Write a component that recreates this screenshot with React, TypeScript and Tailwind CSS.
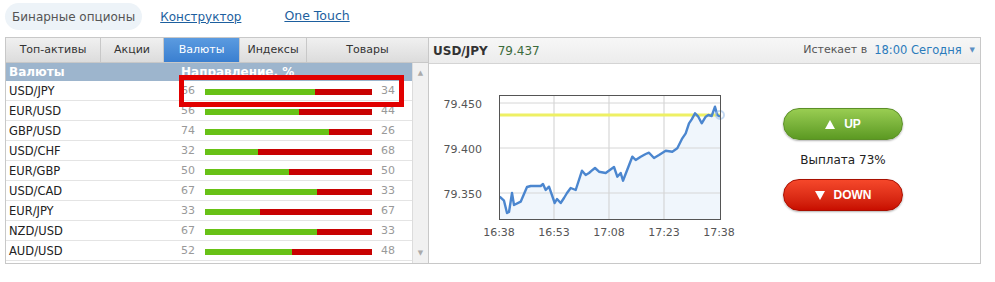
import React from 'react';

const tabs = [
  { label: 'Топ-активы', w: 'w-[95px]' },
  { label: 'Акции', w: 'w-[63px]' },
  { label: 'Валюты', w: 'w-[76px]', active: true },
  { label: 'Индексы', w: 'w-[67px]' },
  { label: 'Товары', w: 'flex-1' },
];

const rows: [string, number][] = [
  ['USD/JPY', 66],
  ['EUR/USD', 56],
  ['GBP/USD', 74],
  ['USD/CHF', 32],
  ['EUR/GBP', 50],
  ['USD/CAD', 67],
  ['EUR/JPY', 33],
  ['NZD/USD', 67],
  ['AUD/USD', 52],
];

// price line in page coordinates
const line: [number, number][] = [
  [500.7, 196.7], [505, 200.7], [508, 213], [510, 212], [513, 193], [515, 205], [521.7, 201.7],
  [528, 187], [531.7, 186], [541.7, 186], [544, 184], [546.7, 190], [550, 186.7], [555.7, 203],
  [558, 199], [561.7, 203], [565, 198], [568, 193], [571.7, 188], [576.7, 190], [583, 170.7],
  [586.7, 175], [590, 173], [592.7, 170.7], [596, 168], [600, 171.7], [606.7, 173], [615, 167],
  [618.3, 176.7], [621.7, 173], [624, 180.7], [633.3, 156.7], [636.7, 160], [641.7, 156.7],
  [646.7, 154], [650, 152.7], [655, 158], [660, 155], [666.7, 150.7], [673.3, 151.7],
  [678.3, 148.3], [683.3, 138.3], [686.7, 133.3], [690, 123.3], [692.7, 119.3], [696, 113.3],
  [699.3, 116.7], [702.7, 123.3], [706.7, 116.7], [709.3, 115], [712.7, 116], [716, 106.7],
  [718.3, 115], [721, 116.7],
];

function Tri({ down }: { down?: boolean }) {
  return (
    <svg width="10" height="9" viewBox="0 0 10 9">
      <polygon points={down ? '0,0 10,0 5,9' : '5,0 10,9 0,9'} fill="white" />
    </svg>
  );
}

function Chart() {
  const pts = line.map(([x, y]) => `${x},${y}`).join(' ');
  const area = `500,219 ${pts} 721,219`;
  const font = { fontFamily: '"DejaVu Sans", sans-serif', fontSize: 11, fill: '#555' };
  return (
    <svg width="310" height="198" viewBox="430 64 310 198" className="block">
      <polygon points={area} fill="#f0f6fc" />
      {[555, 610, 665].map((x) => (
        <line key={x} x1={x} y1={95} x2={x} y2={219} stroke="#cfcfcf" strokeWidth="1" />
      ))}
      {[103, 148, 193].map((y) => (
        <line key={y} x1={500} y1={y} x2={721} y2={y} stroke="#d6d6d6" strokeWidth="1" />
      ))}
      <line x1={500} y1={115} x2={721} y2={115} stroke="#eef064" strokeWidth="3" />
      <polyline points={pts} fill="none" stroke="#4b86cf" strokeWidth="2.4" strokeLinejoin="round" />
      <circle cx={721} cy={115} r={4} fill="none" stroke="#9cc0ea" strokeWidth="2" opacity="0.6" />
      <rect x={500.5} y={95.5} width={221} height={124} fill="none" stroke="#555" strokeWidth="1" />
      {[
        ['79.450', 108],
        ['79.400', 153],
        ['79.350', 198],
      ].map(([t, y]) => (
        <text key={t} x={483} y={y as number} textAnchor="end" {...font}>
          {t}
        </text>
      ))}
      {['16:38', '16:53', '17:08', '17:23', '17:38'].map((t, i) => (
        <text key={t} x={500 + i * 55} y={236} textAnchor="middle" {...font}>
          {t}
        </text>
      ))}
    </svg>
  );
}

export default function App() {
  return (
    <div className="relative w-[995px] h-[282px] bg-white text-[11px] text-[#222]" style={{ fontFamily: '"DejaVu Sans", Verdana, sans-serif' }}>
      <div className="flex items-center h-[27px] mt-[3px] ml-[5px] text-[12px]">
        <div className="h-[27px] px-[7px] flex items-center rounded-full bg-[#edf3f8] text-[#555]">
          Бинарные опционы
        </div>
        <a className="ml-[18px] text-[#1d5f9e] underline">Конструктор</a>
        <a className="ml-[43px] text-[#1d5f9e] underline text-[12.5px]">One Touch</a>
      </div>

      <div className="flex mt-[7px] ml-[5px] w-[976px] h-[227px] border border-[#c8c8c8]">
        <div className="w-[423px] flex flex-col border-r border-[#c8c8c8]">
          <div className="flex h-[25px] border-b border-[#c8c8c8]">
            {tabs.map((t) => (
              <div
                key={t.label}
                className={`${t.w} flex items-center justify-center border-r last:border-r-0 border-[#c8c8c8] ${
                  t.active
                    ? 'bg-gradient-to-b from-[#5b9be0] to-[#3a7fd0] text-white'
                    : 'bg-gradient-to-b from-[#f0f0f0] to-[#dcdcdc] text-[#333]'
                }`}
              >
                {t.label}
              </div>
            ))}
          </div>
          <div className="flex flex-1">
            <div className="flex-1">
              <div className="h-[18px] bg-[#9db5cd] text-white font-bold text-[12px] flex items-center">
                <span className="pl-[3px] w-[175px]">Валюты</span>
                <span>Направление, %</span>
              </div>
              {rows.map(([name, up]) => (
                <div key={name} className="h-[20px] pt-[2px] flex items-center border-b border-[#e4e4e4]">
                  <span className="pl-[3px] w-[175px] text-[11.5px]">{name}</span>
                  <span className="w-[24px] text-[#999]">{up}</span>
                  <div className="w-[167px] h-[6px] flex">
                    <div className="h-full bg-[#68c116]" style={{ width: `${up}%` }} />
                    <div className="h-full flex-1 bg-[#c80202]" />
                  </div>
                  <span className="ml-[9px] text-[#999]">{100 - up}</span>
                </div>
              ))}
            </div>
            <div className="w-[16px] bg-[#f1f1f1] border-l border-[#dcdcdc] flex flex-col items-center justify-between py-[5px] text-[7px] text-[#aaa]">
              <span>▲</span>
              <span>▼</span>
            </div>
          </div>
        </div>

        <div className="flex-1 flex flex-col">
          <div className="h-[26px] flex items-center bg-gradient-to-b from-[#f7f7f7] to-[#ececec] border-b border-[#d4d4d4] px-[4px]">
            <span className="font-bold text-[#333] text-[12px]">USD/JPY</span>
            <span className="ml-[10px] text-[#3c6b3c] text-[12px]">79.437</span>
            <span className="ml-auto text-[#555] text-[11px]">Истекает в</span>
            <span className="ml-[7px] text-[#2b7bbb] text-[11.5px]">18:00 Сегодня</span>
            <span className="ml-[8px] mr-[1px] text-[#5b8fc4] text-[7px]">▼</span>
          </div>
          <div className="flex flex-1">
            <Chart />
            <div className="ml-[44px] mt-[44px] w-[120px] flex flex-col items-center">
              <div className="w-[120px] h-[32px] rounded-full flex items-center justify-center gap-[9px] text-white font-bold text-[12px] bg-gradient-to-b from-[#99cd52] to-[#5c9a22] border border-[#5b8f27] shadow-[0_1px_2px_rgba(0,0,0,0.3)]" style={{ fontFamily: '"Liberation Sans", Arial, sans-serif' }}>
                <Tri />UP
              </div>
              <div className="mt-[11px] text-[12px] text-[#222]">Выплата 73%</div>
              <div className="mt-[10px] w-[120px] h-[32px] rounded-full flex items-center justify-center gap-[9px] text-white font-bold text-[12px] bg-gradient-to-b from-[#f5472a] to-[#c80c00] border border-[#a80f00] shadow-[0_1px_2px_rgba(0,0,0,0.3)]" style={{ fontFamily: '"Liberation Sans", Arial, sans-serif' }}>
                <Tri down />DOWN
              </div>
            </div>
          </div>
        </div>
      </div>

      <div className="absolute left-[179px] top-[72px] w-[225px] h-[32px] border-[5px] border-[#e10000]" />
    </div>
  );
}
